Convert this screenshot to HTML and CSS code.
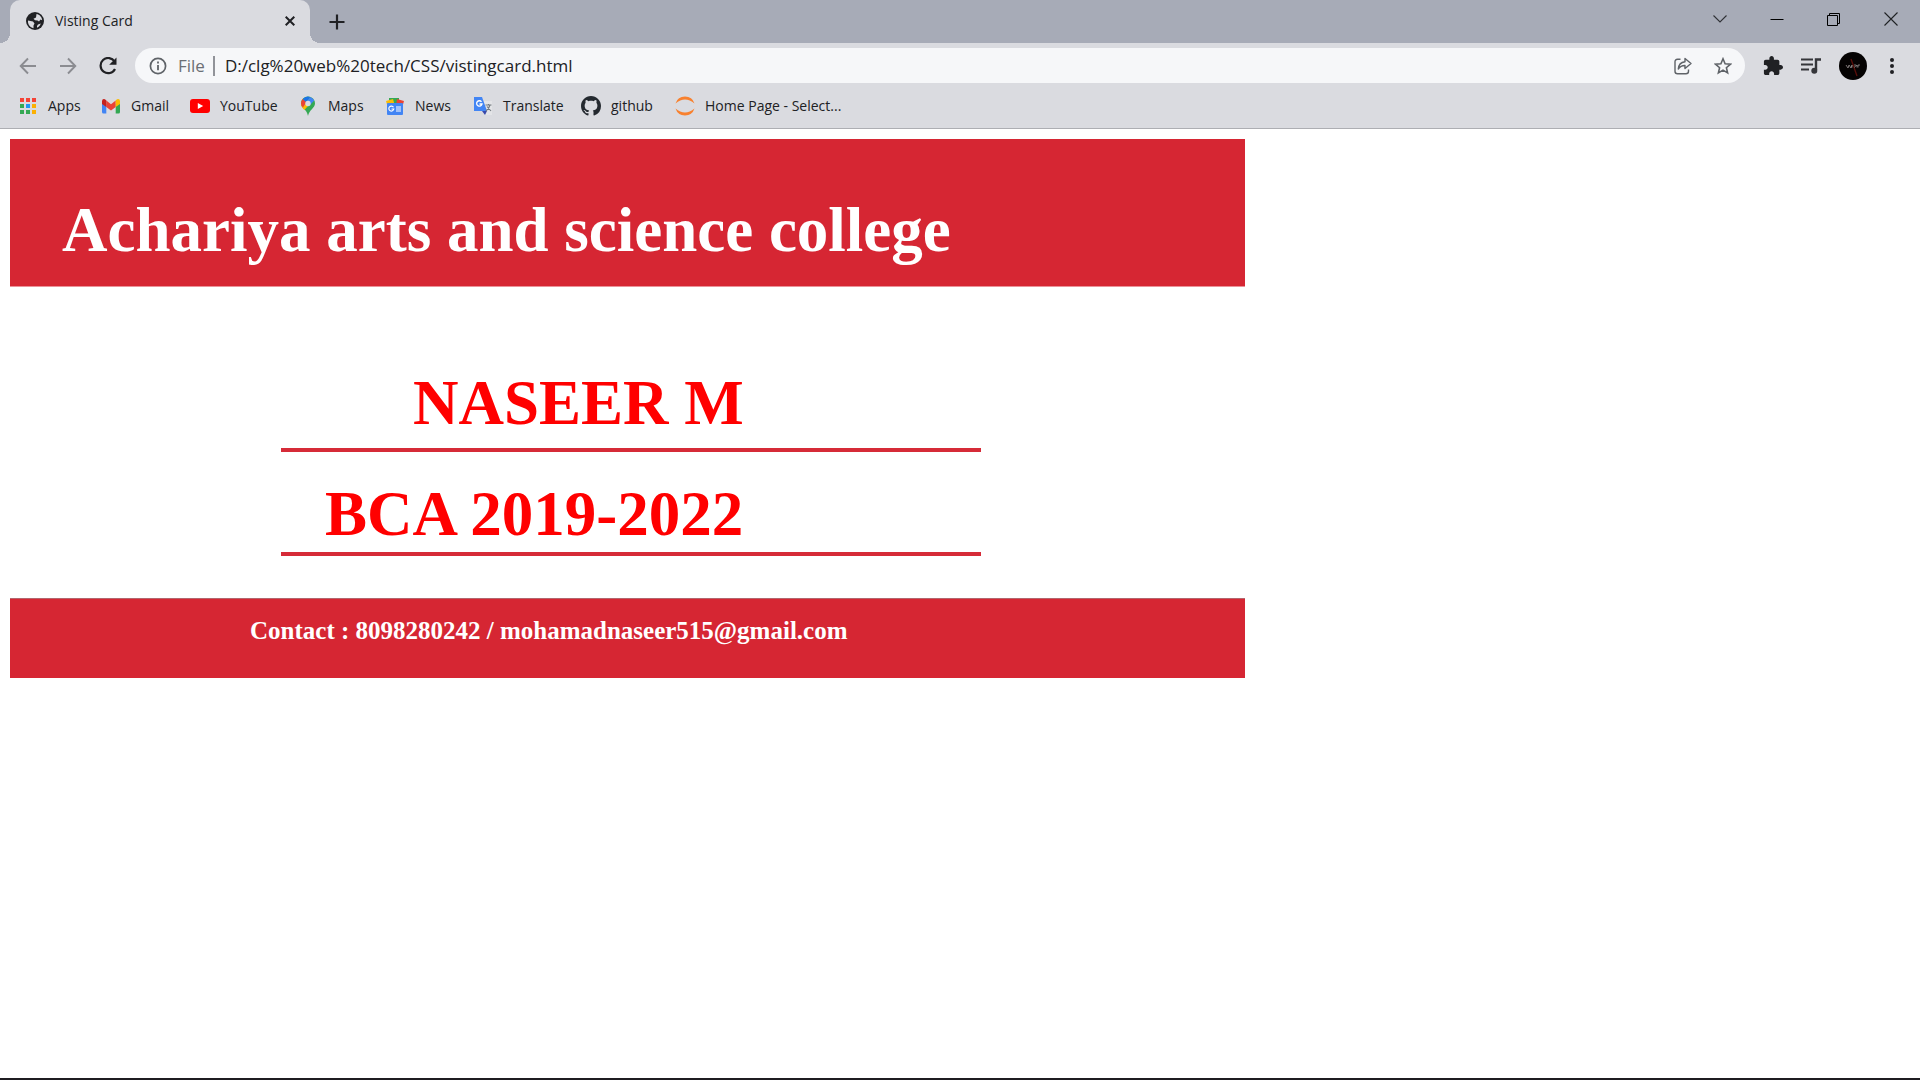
FILE: index.html
```html
<!DOCTYPE html>
<html lang="en">
<head>
<meta charset="utf-8">
<title>Visting Card</title>
<link rel="stylesheet" href="styles.css">
</head>
<body>
<header class="browser">
  <div class="tabstrip">
    <div class="tab">
      <svg class="tab-icon" width="18" height="18" viewBox="0 0 18 18"><circle cx="9" cy="9" r="9" fill="#202124"/><path d="M2 8.500L7 9.500L8.500 11.500L7.500 13.500V16.200C4 15.500 1.600 12.500 2 8.500ZM10.500 1.900C13.500 2.400 16 5 16.200 8.200L14.500 7.500L13 9.500L11.500 8.500L9 8.300L7.500 6.800L10 5.500ZM12 12.500L14.800 11.500C14 13.800 12.800 15 11 15.800V14Z" fill="#dadbe0"/></svg>
      <span class="tab-title">Visting Card</span>
      <button class="icon-btn tab-close" aria-label="Close tab"><svg width="10" height="10" viewBox="0 0 10 10"><path d="M.7.7L9.300 9.300M9.300.7L.7 9.300" stroke="#202124" stroke-width="2"/></svg></button>
    </div>
    <button class="icon-btn new-tab" aria-label="New tab"><svg width="16" height="16" viewBox="0 0 16 16"><path d="M8 .5V15.500M.5 8H15.500" stroke="#202124" stroke-width="2.200"/></svg></button>
    <div class="window-controls">
      <button class="icon-btn" aria-label="Search tabs"><svg width="14" height="14" viewBox="0 0 14 14"><path d="M.5 3.500L7 10L13.500 3.500" fill="none" stroke="#303136" stroke-width="1.100"/></svg></button>
      <button class="icon-btn" aria-label="Minimize"><svg width="14" height="14" viewBox="0 0 14 14"><path d="M.5 7.500H13.500" stroke="#000"/></svg></button>
      <button class="icon-btn" aria-label="Restore"><svg width="14" height="14" viewBox="0 0 14 14"><path d="M.5 3.500H10.500V13.500H.5ZM2.500 3.500V1.500H12.500V11.500H10.500" fill="none" stroke="#000"/></svg></button>
      <button class="icon-btn" aria-label="Close"><svg width="14" height="14" viewBox="0 0 14 14"><path d="M.5.5L13.500 13.500M13.500.5L.5 13.500" stroke="#202124" stroke-width="1.100"/></svg></button>
    </div>
  </div>

  <div class="toolbar">
    <div class="nav">
      <button class="icon-btn" aria-label="Back"><svg width="18" height="18" viewBox="0 0 18 18"><path d="M17 9H2M9 1.500L1.700 9L9 16.500" fill="none" stroke="#8b8c91" stroke-width="1.900"/></svg></button>
      <button class="icon-btn" aria-label="Forward"><svg width="18" height="18" viewBox="0 0 18 18"><path d="M1 9H16M9 1.500L16.300 9L9 16.500" fill="none" stroke="#8b8c91" stroke-width="1.900"/></svg></button>
      <button class="icon-btn" aria-label="Reload"><svg width="18" height="18" viewBox="0 0 18 18"><path d="M15.600 4.500A7.600 7.600 0 1 0 16 12" fill="none" stroke="#202124" stroke-width="2.200"/><path d="M17.500.5V7.800H10.200Z" fill="#202124"/></svg></button>
    </div>
    <div class="omnibox">
      <svg class="info" width="18" height="18" viewBox="0 0 18 18"><circle cx="9" cy="9" r="7.600" fill="none" stroke="#5f6368" stroke-width="1.700"/><path d="M9 8V13.200M9 4.600V6.500" stroke="#5f6368" stroke-width="1.800"/></svg>
      <label class="scheme" for="url">File</label>
      <input class="url" id="url" type="text" value="D:/clg%20web%20tech/CSS/vistingcard.html">
      <button class="icon-btn" aria-label="Share"><svg width="18" height="18" viewBox="0 0 18 18"><path d="M6.500 2.300H3.500Q1 2.300 1 4.800V14.200Q1 16.700 3.500 16.700H12Q14.500 16.700 14.500 14.200V12.500" fill="none" stroke="#5f6368" stroke-width="1.400"/><path d="M11 1.500L17 6.500L11 11.500V8.500C8 8.400 6 9.500 4.300 12C4.600 7.800 7.200 5.100 11 4.700Z" fill="none" stroke="#5f6368" stroke-width="1.400" stroke-linejoin="round"/></svg></button>
      <button class="icon-btn" aria-label="Bookmark this page"><svg width="18" height="18" viewBox="0 0 18 18"><path d="M9 1.800L11.100 6.700L16.500 7.200L12.400 10.700L13.600 15.900L9 13.100L4.400 15.900L5.600 10.700L1.500 7.200L6.900 6.700Z" fill="none" stroke="#5f6368" stroke-width="1.600"/></svg></button>
    </div>
    <div class="actions">
      <button class="icon-btn" aria-label="Extensions"><svg width="20" height="20" viewBox="1 1 22 22"><path fill="#202124" d="M20.500 11H19V7c0-1.100-.9-2-2-2h-4V3.500C13 2.120 11.880 1 10.500 1S8 2.120 8 3.500V5H4c-1.100 0-1.990.9-1.990 2v3.800H3.500c1.490 0 2.700 1.210 2.700 2.700s-1.210 2.700-2.700 2.700H2V20c0 1.100.9 2 2 2h3.800v-1.500c0-1.490 1.210-2.700 2.700-2.700 1.490 0 2.700 1.210 2.700 2.700V22H17c1.100 0 2-.9 2-2v-4h1.500c1.380 0 2.500-1.120 2.500-2.500S21.880 11 20.500 11z"/></svg></button>
      <button class="icon-btn" aria-label="Media controls"><svg width="20" height="16" viewBox="0 0 20 16"><path d="M0 1.500H12M0 6.500H12M0 11.500H8" stroke="#35363a" stroke-width="2"/><path d="M15 12V1.500H20" fill="none" stroke="#35363a" stroke-width="2.400"/><circle cx="13.300" cy="12.700" r="3" fill="#35363a"/></svg></button>
      <button class="icon-btn" aria-label="Profile"><svg width="28" height="28" viewBox="0 0 28 28"><circle cx="14" cy="14" r="14" fill="#050303"/><path d="M12 7L18 24" stroke="#5c0f0a" stroke-width="1.300"/><path d="M7 13L9 16L10 13L12 16L13 13V15.500M15 13H17M15 15.500L18 13V15.500M19 15.500V13H21" fill="none" stroke="#aaa2a2" stroke-width=".7"/></svg></button>
      <button class="icon-btn" aria-label="Menu"><svg width="6" height="18" viewBox="0 0 6 18"><g fill="#202124"><circle cx="3" cy="3" r="2"/><circle cx="3" cy="9" r="2"/><circle cx="3" cy="15" r="2"/></g></svg></button>
    </div>
  </div>

  <nav class="bookmarks">
    <a href="#"><svg width="20" height="20" viewBox="0 0 20 20"><path d="M2 2h4v4H2zM8 2h4v4H8zM14 2h4v4h-4z" fill="#f44336"/><path d="M2 8h4v4H2zM2 14h4v4H2zM8 14h4v4H8z" fill="#34a853"/><path d="M8 8h4v4H8z" fill="#2196f3"/><path d="M14 8h4v4h-4zM14 14h4v4h-4z" fill="#fbb003"/></svg>Apps</a>
    <a href="#"><svg width="20" height="20" viewBox="0 0 20 20"><path d="M1 5V16Q1 17.500 2.500 17.500H5.300V8Z" fill="#4285f4"/><path d="M14.700 8V17.500H17.500Q19 17.500 19 16V5Z" fill="#34a853"/><path d="M5.300 4.500L10 8.200L14.700 4.500V11L10 14.500L5.300 11Z" fill="#ea4335"/><path d="M1 5Q1.200 2.500 4 3.300L5.300 4.500V11L1 8Z" fill="#c5221f"/><path d="M19 5Q18.800 2.500 16 3.300L14.700 4.500V11L19 8Z" fill="#fbbc04"/></svg>Gmail</a>
    <a href="#"><svg width="20" height="20" viewBox="0 0 20 20"><rect y="3" width="20" height="14" rx="3" fill="#f00"/><path d="M7.800 7V13L13.200 10Z" fill="#fff"/></svg>YouTube</a>
    <a href="#"><svg width="20" height="20" viewBox="0 0 20 20"><path d="M10 .5A7 7 0 0 0 3 7.500C3 12.500 9 13 10 20C11 14 17 12 17 7.500A7 7 0 0 0 10 .5Z" fill="#34a853"/><path d="M4.800 12.200C3.500 10.500 3 9 3 7.500L4.600 3L8 5.500L10 10L6.300 14Z" fill="#fbbc04"/><path d="M3 7.500Q3 4.800 4.700 3L8.500 6L5 11.500Q3 9.500 3 7.500Z" fill="#ea4335"/><path d="M4.700 3A7 7 0 0 1 12.200 .9L8 6Z" fill="#1a73e8"/><path d="M12.200.9A7 7 0 0 1 16.200 4.500L11.500 9.500L9 5Z" fill="#4285f4"/><circle cx="10" cy="7.500" r="2.700" fill="#dadbe0"/></svg>Maps</a>
    <a href="#"><svg width="20" height="20" viewBox="0 0 20 20"><path d="M4 2H14V8H4Z" fill="#34a853"/><path d="M1 5L8 3L10 10L3 12Z" fill="#fbbc04"/><path d="M12 3L19 5L17 12L11 10Z" fill="#ea4335"/><rect x="2" y="7" width="16" height="12" rx="1" fill="#4285f4"/><path d="M8.500 11.300A2.500 2.500 0 1 0 8.800 13H6.500M11 11H16M11 13H16M11 15H16" fill="none" stroke="#fff" stroke-width="1.200"/></svg>News</a>
    <a href="#"><svg width="20" height="20" viewBox="0 0 20 20"><path d="M9 5H19V19H12Z" fill="#e3e4e7"/><path d="M1 1H9L14 15H1Z" fill="#4285f4"/><path d="M9 15H14L12 19Z" fill="#3949ab"/><path d="M8.500 5.800A2.700 2.700 0 1 0 9 8H6.500" fill="none" stroke="#fff" stroke-width="1.300"/><path d="M12.500 9H18.500M15.500 8V9M17 9Q16 13 12.800 15M14 10.500L18 15" fill="none" stroke="#747a80" stroke-width="1.100"/></svg>Translate</a>
    <a href="#"><svg width="20" height="20" viewBox="0 0 16 16"><path fill="#24292f" d="M8 0C3.580 0 0 3.580 0 8c0 3.540 2.290 6.530 5.470 7.590.4.070.55-.17.55-.38 0-.19-.01-.82-.01-1.490-2.010.37-2.530-.49-2.690-.94-.09-.23-.48-.94-.82-1.130-.28-.15-.68-.52-.01-.53.63-.01 1.080.58 1.230.82.72 1.210 1.870.87 2.330.66.070-.52.28-.87.51-1.070-1.780-.2-3.640-.89-3.640-3.950 0-.87.31-1.590.82-2.150-.08-.2-.36-1.020.08-2.120 0 0 .67-.21 2.200.82.64-.18 1.320-.27 2-.27s1.360.09 2 .27c1.530-1.040 2.200-.82 2.200-.82.44 1.100.16 1.920.08 2.120.51.56.82 1.270.82 2.150 0 3.070-1.870 3.750-3.650 3.950.29.25.54.73.54 1.480 0 1.070-.01 1.930-.01 2.200 0 .21.15.46.55.38A8.010 8.010 0 0 0 16 8c0-4.420-3.580-8-8-8z"/></svg>github</a>
    <a href="#"><svg width="20" height="20" viewBox="0 0 20 20"><path d="M.5 7.500A10 10 0 0 1 19.500 7.500Q10-.5 .5 7.500ZM.5 12.500A10 10 0 0 0 19.500 12.500Q10 20.500 .5 12.500Z" fill="#f8812f"/></svg>Home Page - Select...</a>
  </nav>
</header>

<main class="page">
  <article class="card">
    <header class="banner"><h1>Achariya arts and science college</h1></header>
    <section class="person">
      <h2 class="line name">NASEER M</h2>
      <h2 class="line course">BCA 2019-2022</h2>
    </section>
    <footer class="contact">Contact : 8098280242 / mohamadnaseer515@gmail.com</footer>
  </article>
</main>
</body>
</html>
```
FILE: styles.css
```css
* { box-sizing: border-box; }

body {
  margin: 0;
  min-height: 100vh;
  display: flex;
  flex-direction: column;
  background: #fff;
  border-bottom: 2px solid #1f1d21;
}

.browser {
  background: #dadbe0;
  border-bottom: 1px solid #adaeb3;
  font-family: "Open Sans", "Noto Sans", sans-serif;
  color: #202124;
}

.icon-btn {
  display: flex;
  align-items: center;
  justify-content: center;
  flex: none;
  padding: 0;
  border: 0;
  background: none;
}

svg { display: block; flex: none; }

/* Tab strip */
.tabstrip {
  display: flex;
  height: 43px;
  padding: 0 1px 0 10px;
  background: #a7abb7;
}

.tab {
  position: relative;
  display: flex;
  align-items: center;
  width: 300px;
  padding: 0 15px 1px 16px;
  border-radius: 10px 10px 0 0;
  background: #dadbe0;
}

.tab::before,
.tab::after {
  content: "";
  position: absolute;
  bottom: 0;
  width: 10px;
  height: 10px;
}

.tab::before {
  left: -10px;
  background: radial-gradient(circle at 0 0, #a7abb7 10px, #dadbe0 10px);
}

.tab::after {
  right: -10px;
  background: radial-gradient(circle at 100% 0, #a7abb7 10px, #dadbe0 10px);
}

.tab-title {
  flex: 1;
  margin-left: 11px;
  font-size: 14px;
  line-height: 20px;
}

.new-tab { width: 54px; }

.window-controls {
  display: flex;
  height: 37px;
  margin-left: auto;
}

.window-controls .icon-btn { width: 57px; }

/* Toolbar */
.toolbar {
  display: flex;
  align-items: center;
  height: 45px;
}

.nav {
  display: flex;
  padding: 0 7px 0 8px;
}

.nav .icon-btn { width: 40px; height: 40px; }

.omnibox {
  display: flex;
  align-items: center;
  flex: 1;
  height: 35px;
  padding: 0 13px 0 14px;
  border-radius: 18px;
  background: #f6f7f9;
  font-size: 17px;
}

.scheme {
  margin-left: 11px;
  padding-right: 8px;
  border-right: 2px solid #919399;
  line-height: 20px;
  color: #6b6f75;
}

.url {
  flex: 1;
  min-width: 0;
  margin-left: 10px;
  padding: 0;
  border: 0;
  background: none;
  font: inherit;
  color: #202124;
}

.omnibox .icon-btn { margin-left: 22px; }

.actions {
  display: flex;
  align-items: center;
  gap: 18px;
  padding: 0 25px 0 18px;
}

.actions .icon-btn:last-child { margin-left: 4px; }

/* Bookmarks bar */
.bookmarks {
  display: grid;
  grid-template-columns: 83px 89px 108px 87px 88px 108px 94px auto;
  justify-content: start;
  padding: 0 18px 5px;
}

.bookmarks a {
  display: flex;
  align-items: center;
  gap: 10px;
  height: 35px;
  font-size: 14px;
  white-space: nowrap;
  color: inherit;
  text-decoration: none;
}

/* Visiting card */
.page { flex: 1; padding: 10px; }

.card {
  max-width: 1235px;
  font-family: "Liberation Serif", "Times New Roman", serif;
  font-weight: bold;
}

.card h1,
.card h2 {
  margin: 0;
  font-size: 63px;
  line-height: 72px;
}

.banner {
  padding: 55px 52px 20px;
  border-bottom: 1px solid #eb9299;
  background: #d62633;
  color: #fff;
}

.person {
  padding: 80px 264px 42px 271px;
  color: #f00;
}

.line { border-bottom: 4px solid #d62b38; }

.name { padding: 0 0 9px 132px; }

.course { padding: 26px 0 2px 44px; }

.contact {
  padding: 17px 240px 32px;
  border-top: 1px solid #b3666d;
  background: #d62633;
  font-size: 25px;
  line-height: 30px;
  color: #fff;
}
```
